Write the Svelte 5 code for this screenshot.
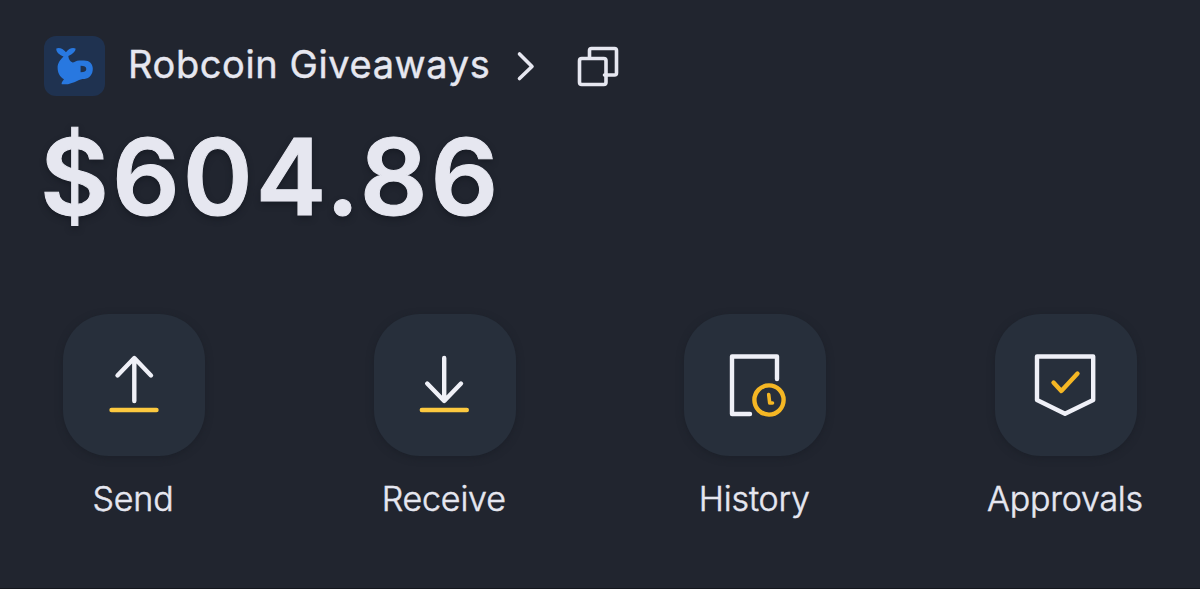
<script>
  const actions = ['Send', 'Receive', 'History', 'Approvals'];
</script>

<main class="wallet">
  <header class="account">
    <span class="avatar">
      <svg width="61" height="60" viewBox="0 0 61 60" aria-hidden="true">
        <path fill="#2878e0" fill-rule="evenodd" d="M12.3 12.6C14.5 11.2 19 12.2 22 16.3C24.5 12.4 29 11.1 31.5 12.6C32 14.8 28.5 18.8 24.3 20C24.6 23 26 25.5 28.5 26.5C30.5 26.3 32 24.7 35.3 24.5H40C45.5 24.5 48.8 28 48.8 32.8C48.8 38.6 45.5 42.3 40.5 43C37.5 43 36 43.6 33 45C29.5 46.8 25.5 47.4 24 48.3H17.8C17 47 18.5 45.5 20 43.3C15.5 40.8 13.6 36.5 13.6 31.5C13.6 27 16.3 23.6 19.5 20.4C15 19 12 16 12.3 12.6ZM36.6 29.8V36.2C40.4 36.2 42.3 35.4 42.3 33C42.3 30.6 40.4 29.8 36.6 29.8Z" />
      </svg>
    </span>
    <span class="name">Robcoin Giveaways</span>
    <svg class="chevron" width="20" height="32" viewBox="0 0 20 32" aria-hidden="true">
      <path d="M3.5 4L16 16.5L3.5 28.5" />
    </svg>
    <svg class="copy" width="44" height="44" viewBox="0 0 44 44" aria-hidden="true">
      <path d="M13.5 13V6.5Q13.5 4.5 15.5 4.5H38.5Q40.5 4.5 40.5 6.5V29Q40.5 31 38.5 31H28.5" />
      <rect x="3.5" y="14.5" width="26.5" height="26" rx="2.2" />
    </svg>
  </header>

  <div class="balance">$604.86</div>

  <nav class="actions">
    {#each actions as label}
      <div class="action">
        <div class="tile">
          <svg width="142" height="142" viewBox="0 0 142 142" aria-hidden="true">
            {#if label === 'Send'}
              <path class="white" d="M71.3 87V44.5M54.5 61.5L71.3 44L88 61.5" />
              <path class="yellow" d="M48.5 96H93.5" />
            {:else if label === 'Receive'}
              <path class="white" d="M70.2 44V86.5M53.2 69.5L70.2 87L87 69.5" />
              <path class="yellow" d="M47.8 96H92.8" />
            {:else if label === 'History'}
              <path class="white" d="M93 65V42.5H48V100H66" />
              <circle class="gold" cx="85" cy="86" r="14.6" />
              <path class="gold hand" d="M84.7 80.5L85.7 89H88.5" />
            {:else}
              <path class="white" d="M42 42.5H98.2V86L70 99.8L42 86Z" />
              <path class="gold" d="M58.5 68.5L66.3 77L82.5 59.5" />
            {/if}
          </svg>
        </div>
        <span class="label">{label}</span>
      </div>
    {/each}
  </nav>
</main>

<style>
  :global(body) {
    margin: 0;
    background: #21252f;
  }
  .wallet {
    box-sizing: border-box;
    width: 1200px;
    height: 589px;
    padding-top: 36px;
    overflow: hidden;
    background: #21252f;
    border-bottom: 1px solid #14171e;
    color: #e6e7f0;
    font-family: Inter, sans-serif;
  }
  .account {
    display: flex;
    align-items: center;
    height: 60px;
    padding-left: 44px;
  }
  .avatar {
    width: 61px;
    height: 60px;
    border-radius: 12px;
    background: #1f3250;
  }
  .avatar svg {
    display: block;
  }
  .name {
    width: 362px;
    margin-left: 23px;
    font-size: 38px;
    font-weight: 400;
    line-height: 57px;
    height: 60px;
    letter-spacing: 0.6px;
    white-space: nowrap;
    -webkit-text-stroke: 0.4px #e6e7f0;
  }
  .account .chevron {
    margin-left: 26px;
  }
  .account .copy {
    margin-left: 40px;
  }
  .chevron,
  .copy {
    fill: none;
    stroke: #e6e7f0;
    stroke-width: 3.6;
    stroke-linecap: round;
    stroke-linejoin: round;
  }
  .balance {
    height: 160px;
    padding-left: 40px;
    font-size: 106px;
    font-weight: 600;
    line-height: 162px;
    letter-spacing: 3px;
    white-space: nowrap;
    -webkit-text-stroke: 1px #e6e7f0;
    text-shadow: 0 3px 6px #171b24;
  }
  .actions {
    display: flex;
    justify-content: space-between;
    padding: 58px 63px 0;
  }
  .action {
    display: flex;
    flex-direction: column;
    align-items: center;
    width: 142px;
  }
  .tile {
    width: 142px;
    height: 142px;
    border-radius: 46px;
    background: #272f3b;
    box-shadow: 0 2px 7px #1c2029;
  }
  .tile svg {
    display: block;
    fill: none;
    stroke-width: 4.4;
    stroke-linecap: round;
    stroke-linejoin: round;
  }
  .white {
    stroke: #eff0f7;
  }
  .yellow {
    stroke: #fcc93f;
  }
  .gold {
    stroke: #f5b724;
  }
  .hand {
    stroke-width: 3.6;
  }
  .label {
    margin-top: 23px;
    margin-right: 2px;
    font-size: 34px;
    font-weight: 300;
    line-height: 40px;
    letter-spacing: -0.2px;
    white-space: nowrap;
    -webkit-text-stroke: 0.5px #e6e7f0;
  }
</style>
